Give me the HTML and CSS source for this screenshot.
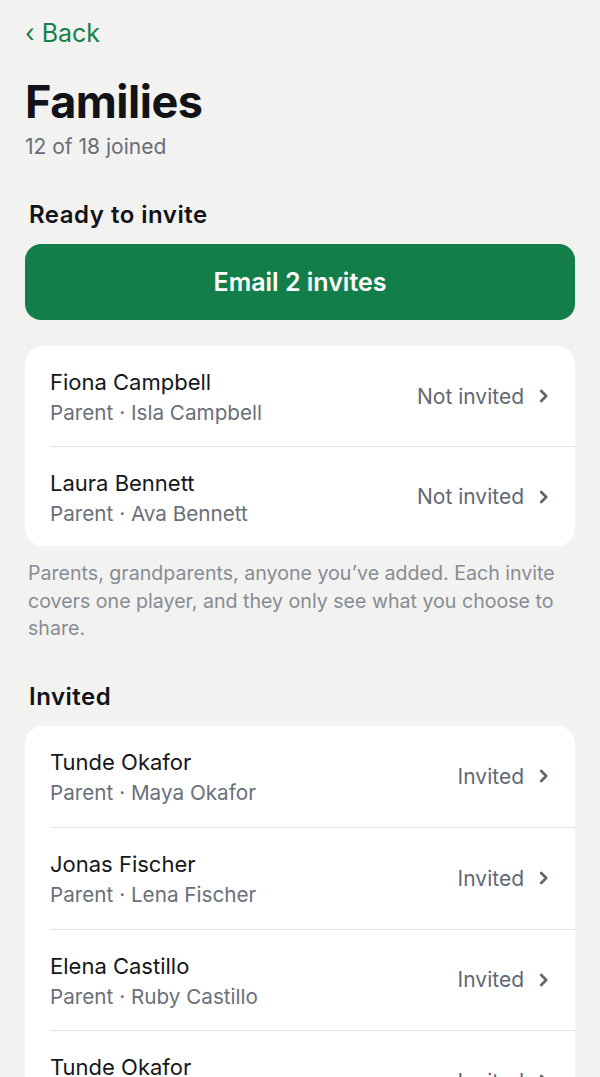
FILE: index.html
```html
<!DOCTYPE html>
<html>
<head>
<meta charset="utf-8">
<link rel="stylesheet" href="styles.css">
</head>
<body>
<div class="page">
  <a class="back">‹ Back</a>
  <h1 class="title">Families</h1>
  <div class="subtitle">12 of 18 joined</div>

  <h2 class="section">Ready to invite</h2>
  <button class="primary">Email 2 invites</button>

  <div class="card">
    <div class="row">
      <div class="info"><div class="name">Fiona Campbell</div><div class="meta">Parent · Isla Campbell</div></div>
      <div class="status">Not invited</div>
      <svg class="chev" viewBox="0 0 10 16"><path d="M2.5 3.5 7 8l-4.5 4.5"/></svg>
    </div>
    <div class="row">
      <div class="info"><div class="name">Laura Bennett</div><div class="meta">Parent · Ava Bennett</div></div>
      <div class="status">Not invited</div>
      <svg class="chev" viewBox="0 0 10 16"><path d="M2.5 3.5 7 8l-4.5 4.5"/></svg>
    </div>
  </div>
  <p class="note">Parents, grandparents, anyone you’ve added. Each invite covers one player, and they only see what you choose to share.</p>

  <h2 class="section invited">Invited</h2>
  <div class="card">
    <div class="row tall">
      <div class="info"><div class="name">Tunde Okafor</div><div class="meta">Parent · Maya Okafor</div></div>
      <div class="status">Invited</div>
      <svg class="chev" viewBox="0 0 10 16"><path d="M2.5 3.5 7 8l-4.5 4.5"/></svg>
    </div>
    <div class="row tall">
      <div class="info"><div class="name">Jonas Fischer</div><div class="meta">Parent · Lena Fischer</div></div>
      <div class="status">Invited</div>
      <svg class="chev" viewBox="0 0 10 16"><path d="M2.5 3.5 7 8l-4.5 4.5"/></svg>
    </div>
    <div class="row tall">
      <div class="info"><div class="name">Elena Castillo</div><div class="meta">Parent · Ruby Castillo</div></div>
      <div class="status">Invited</div>
      <svg class="chev" viewBox="0 0 10 16"><path d="M2.5 3.5 7 8l-4.5 4.5"/></svg>
    </div>
    <div class="row tall">
      <div class="info"><div class="name">Tunde Okafor</div><div class="meta">Parent · Maya Okafor</div></div>
      <div class="status">Invited</div>
      <svg class="chev" viewBox="0 0 10 16"><path d="M2.5 3.5 7 8l-4.5 4.5"/></svg>
    </div>
  </div>
</div>
</body>
</html>
```

FILE: styles.css
```css
html, body {
  margin: 0;
  padding: 0;
  background: #f2f2f1;
}
body {
  font-family: Inter, "Liberation Sans", sans-serif;
  color: #14161a;
}
.page {
  padding: 16px 25px 40px 25px;
}
.back {
  display: block;
  color: #168049;
  font-size: 25px;
  line-height: 34px;
  height: 34px;
}
.title {
  margin: 26px 0 0 0;
  font-size: 45px;
  font-weight: 700;
  line-height: 52px;
  letter-spacing: -0.5px;
  color: #111318;
}
.subtitle {
  margin-top: 6px;
  font-size: 21px;
  line-height: 26px;
  color: #686e78;
}
.section {
  margin: 40px 0 0 4px;
  font-size: 24px;
  font-weight: 600;
  line-height: 30px;
  letter-spacing: 0.5px;
  color: #111318;
}
.primary {
  display: block;
  width: 100%;
  height: 76px;
  margin-top: 14px;
  border: none;
  border-radius: 16px;
  background: #137e49;
  color: #ffffff;
  font-family: inherit;
  font-size: 25px;
  font-weight: 600;
}
.card {
  margin-top: 26px;
  background: #ffffff;
  border-radius: 18px;
  overflow: hidden;
}
.row {
  display: flex;
  align-items: center;
  height: 100px;
  padding-left: 25px;
  padding-right: 25px;
  box-sizing: border-box;
}
.row.tall {
  height: 101.5px;
}
.row + .row {
  border-top: 1.5px solid #e6e6e6;
  margin-left: 25px;
  padding-left: 0;
}
.info {
  flex: 1;
  padding-top: 2px;
}
.name {
  font-size: 22px;
  line-height: 30px;
  color: #15171b;
}
.meta {
  margin-top: 2px;
  font-size: 20.7px;
  line-height: 28px;
  color: #6a707a;
}
.status {
  font-size: 21px;
  color: #626873;
}
.chev {
  width: 12px;
  height: 18px;
  margin-left: 14px;
  fill: none;
  stroke: #626873;
  stroke-width: 2.4;
  stroke-linecap: round;
  stroke-linejoin: round;
}
.note {
  margin: 14px 0 0 3px;
  font-size: 19.6px;
  line-height: 27.5px;
  color: #878c94;
}
.section.invited {
  margin-top: 39px;
}
.invited + .card {
  margin-top: 14px;
}
```
